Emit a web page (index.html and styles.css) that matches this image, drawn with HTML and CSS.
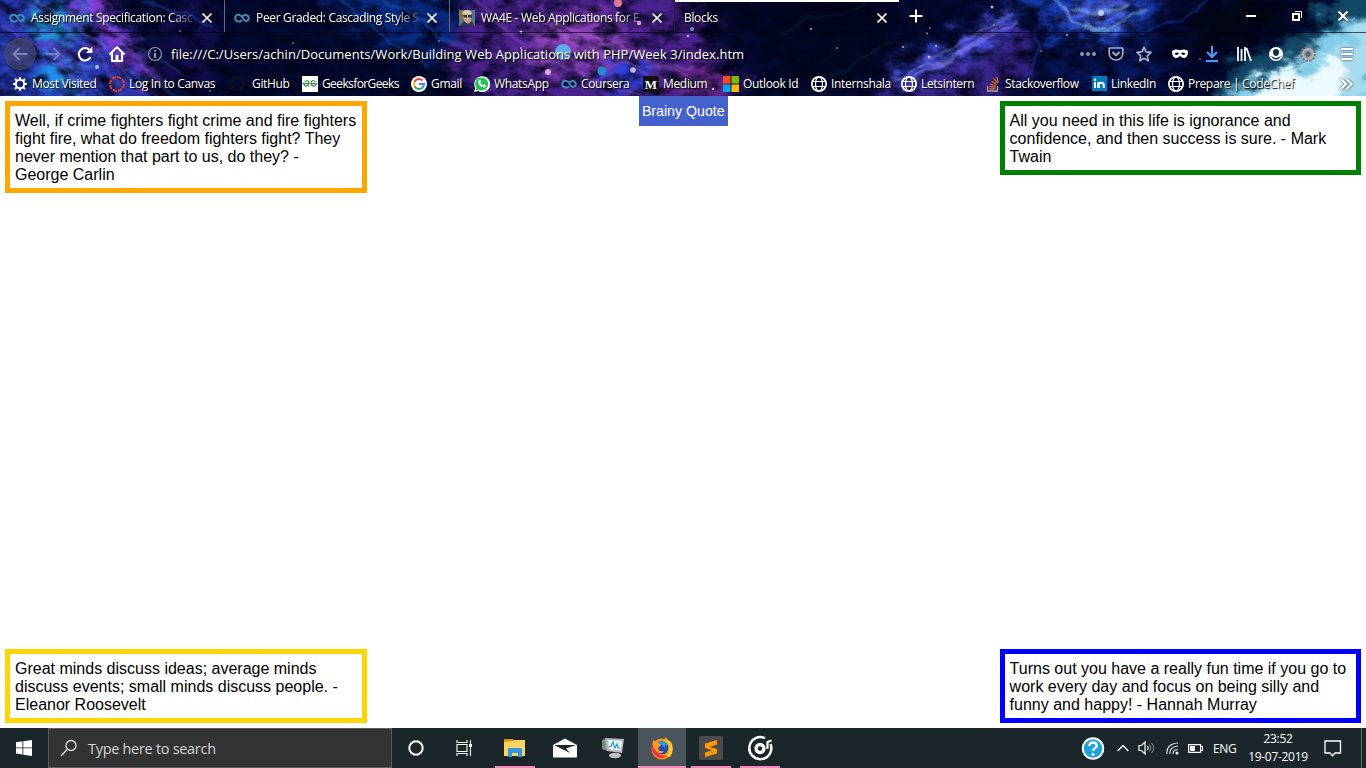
FILE: index.html
```html
<!DOCTYPE html>
<html lang="en">
<head>
<meta charset="utf-8">
<title>Blocks</title>
<link rel="stylesheet" href="styles.css">
</head>
<body>
<svg class="defs" width="0" height="0">
  <symbol id="coursera" viewBox="0 0 16 16"><path d="M8.2 10.2C7 12 2 12.600 1.200 8.600 1 4.500 5.600 3.200 8 6.800L9.500 9.300C11 12 15 11 14.800 7.800 14.300 4.300 10 4.200 8.700 6.300" fill="none" stroke="#4588b5" stroke-width="2"/></symbol>
  <symbol id="x" viewBox="0 0 16 16"><path d="M3.500 3.500l9 9M12.500 3.500l-9 9" stroke="#fff" stroke-width="1.700"/></symbol>
  <symbol id="globe" viewBox="0 0 16 16"><g fill="none" stroke="#fff" stroke-width="1.200"><circle cx="8" cy="8" r="7.100" stroke-width="1.800"/><ellipse cx="8" cy="8" rx="3.500" ry="7"/><path d="M1.500 5.500h13M1.500 10.500h13"/></g></symbol>
</svg>
<header class="browser">
  <svg class="space" width="1366" height="96" viewBox="0 0 1366 96">
    <defs>
      <filter id="cloud" x="-10%" y="-50%" width="120%" height="200%" color-interpolation-filters="sRGB"><feGaussianBlur stdDeviation="8" result="b"/><feTurbulence type="fractalNoise" baseFrequency=".05 .07" numOctaves="6" seed="4"/><feDisplacementMap in="b" scale="45" xChannelSelector="R" yChannelSelector="G"/></filter>
      <filter id="mist" x="-10%" y="-50%" width="120%" height="200%" color-interpolation-filters="sRGB"><feGaussianBlur stdDeviation="4" result="b"/><feTurbulence type="fractalNoise" baseFrequency=".04 .06" numOctaves="6" seed="7"/><feDisplacementMap in="b" scale="45" xChannelSelector="R" yChannelSelector="G"/></filter>
      <filter id="wisp" filterUnits="userSpaceOnUse" x="0" y="0" width="1366" height="96" color-interpolation-filters="sRGB"><feGaussianBlur stdDeviation="1.100" result="b"/><feTurbulence type="fractalNoise" baseFrequency=".035" numOctaves="3" seed="9"/><feDisplacementMap in="b" scale="16" xChannelSelector="R" yChannelSelector="G"/></filter>
      <filter id="dust" x="0" y="0" width="100%" height="100%" color-interpolation-filters="sRGB"><feTurbulence type="fractalNoise" baseFrequency=".05 .08" numOctaves="6" seed="12"/><feColorMatrix values="0 0 0 0 0  0 0 0 0 .01  0 0 0 0 .1  2.200 0 0 0 -.85"/></filter>
    </defs>
    <rect width="1366" height="96" fill="#030a30"/>
    <g filter="url(#cloud)">
      <path d="M-40-30H90L150 70 150 120H-40z" fill="#2536ac"/>
      <path d="M88-30L112 20 158 85 122 66 80 10z" fill="#9340dd"/>
      <ellipse cx="55" cy="20" rx="24" ry="20" fill="#1d9ed8"/>
      <ellipse cx="60" cy="78" rx="26" ry="16" fill="#1f95f2"/>
      <path d="M0 20L60 45 100 90 70 70z" fill="#633fc8"/>
      <ellipse cx="190" cy="40" rx="32" ry="45" fill="#120d4c"/>
      <path d="M300-20L460-10 450 50 400 50 345 15z" fill="#082b80"/>
      <path d="M470-20H690L740 120H480L450 60z" fill="#49228b"/>
      <ellipse cx="580" cy="45" rx="55" ry="30" fill="#8640b3"/>
      <ellipse cx="625" cy="80" rx="26" ry="18" fill="#2640de"/>
      <ellipse cx="700" cy="85" rx="38" ry="22" fill="#602584"/>
      <ellipse cx="825" cy="40" rx="60" ry="50" fill="#020821"/>
      <path d="M850 120L900 70 1020 25 1030 80 960 120z" fill="#372386"/>
      <path d="M885 76L940 46 1010 10 1018 30 955 64 900 90z" fill="#4652e5"/>
      <path d="M985-30H1165L1140 40 1060 40z" fill="#173bb0"/>
      <ellipse cx="1100" cy="14" rx="32" ry="16" fill="#5068e5"/>
      <ellipse cx="1110" cy="75" rx="70" ry="18" fill="#07185d"/>
      <path d="M1200 0H1300L1250 50H1190z" fill="#010512"/>
    </g>
    <rect width="1366" height="96" filter="url(#dust)"/>
    <g filter="url(#mist)">
      <path d="M1195 130L1235 60 1305 35 1340-10H1420V130z" fill="#124866"/>
      <path d="M1195 125L1240 88 1300 62 1330 25 1380 15V130z" fill="#81cce6"/>
      <path d="M1240 120L1255 85 1290 73 1330 62 1350 82 1310 130z" fill="#eafaff"/>
      <path d="M1335 60L1355 28 1380 10 1400 50 1360 100z" fill="#a8dcee"/>
    </g>
    <g filter="url(#wisp)" fill="none" opacity=".5">
      <path d="M10-5Q80 20 125 100M30-5Q100 35 145 100M70-5Q110 25 165 85M0 25Q50 40 90 100" stroke="#a980ff" stroke-width="1.300"/>
      <path d="M0 45Q70 48 110 100M5 70L60 100M130-5L210 25M340 0L430 70M370-5L480 55" stroke="#357bf5" stroke-width="1.500"/>
      <path d="M60 10Q105 65 190 100M85-5Q120 45 185 75" stroke="#5da6ff"/>
      <path d="M470-5L530 55 650 100M500 15Q580 20 650 75M540 5Q570 70 690 65M500 35Q590 25 710 85" stroke="#c377e6" stroke-width="1.300"/>
      <path d="M780 30L870 5M830 75L890 45" stroke="#17747c"/>
      <path d="M890 80L950 58 1005 22M900 88L965 50 1020 20M930 60L1015 12" stroke="#aba5ff" stroke-width="2"/>
      <path d="M1035 35Q1045 60 1020 90M1140 35L1210 0" stroke="#2948dc" stroke-width="2"/>
      <path d="M1055 0L1075 25 1105 30 1150 8M1070 8L1100 14 1130 5M1085 24L1120 30" stroke="#9bdcff" stroke-width="2.500"/>
    </g>
    <g fill="#7fc5ff"><circle cx="563" cy="52" r="8" fill="#64a9e8"/><circle cx="602" cy="71" r="4.500" fill="#2789cf"/><circle cx="548" cy="72" r="3" fill="#d6a6e5"/><circle cx="618" cy="3" r="4" fill="#e27898"/><circle cx="633" cy="70" r="2.800" fill="#c2b3ee"/><circle cx="692" cy="29" r="2"/><circle cx="688" cy="36" r="1.300"/><circle cx="639" cy="23" r="2.200" fill="#e8a9ce"/></g>
    <g fill="#d9ddff" opacity=".8"><circle cx="97" cy="67" r="2"/><circle cx="180" cy="31" r=".8"/><circle cx="293" cy="43" r=".8"/><circle cx="298" cy="20" r=".8"/><circle cx="521" cy="32" r="1.500"/><circle cx="521" cy="48" r="1"/><circle cx="439" cy="41" r=".8"/><circle cx="811" cy="29" r="1.200"/><circle cx="837" cy="48" r=".8"/><circle cx="903" cy="47" r="1"/><circle cx="927" cy="33" r="1"/><circle cx="930" cy="28" r=".8"/><circle cx="936" cy="46" r="1"/><circle cx="929" cy="57" r="1.300"/><circle cx="992" cy="7" r="1.500"/><circle cx="994" cy="25" r=".8"/><circle cx="1101" cy="13" r="3"/><circle cx="1067" cy="35" r="1"/><circle cx="1041" cy="51" r=".8"/><circle cx="1200" cy="59" r=".8"/><circle cx="210" cy="91" r=".8"/><circle cx="713" cy="89" r="1.300"/></g>
  </svg>

  <div class="tabs">
    <div class="tab"><svg class="i16"><use href="#coursera"/></svg><span class="title">Assignment Specification: Casc</span><svg class="i16"><use href="#x"/></svg></div>
    <div class="tab"><svg class="i16"><use href="#coursera"/></svg><span class="title">Peer Graded: Cascading Style S</span><svg class="i16"><use href="#x"/></svg></div>
    <div class="tab last"><svg class="i16" viewBox="0 0 16 16"><path fill="#54758a" d="M0 0h16v16H0z"/><path fill="#8a704d" d="M0 0h4v9H0z"/><path fill="#caa78c" d="M4 4h8v7l-3 3-4-2z"/><path fill="#d5d0a8" d="M3 4q1-4 5-4t5 4z"/><path fill="#353842" d="M4 5h4v2.500H5zM9 5h4v2.500H9zM1 16l4-5 4 3 4-3 2 5z"/></svg><span class="title">WA4E - Web Applications for E</span><svg class="i16"><use href="#x"/></svg></div>
    <div class="tab active"><span class="title">Blocks</span><svg class="i16"><use href="#x"/></svg></div>
    <svg class="plus" width="16" height="16" viewBox="0 0 16 16"><path d="M8 1.500v13M1.500 8h13" stroke="#fff" stroke-width="2"/></svg>
    <div class="window-buttons">
      <svg width="12" height="12" viewBox="0 0 12 12"><path d="M1 6h10" stroke="#fff" stroke-width="2"/></svg>
      <svg width="12" height="12" viewBox="0 0 12 12"><path d="M2 4h6v6H2z" fill="none" stroke="#fff" stroke-width="2"/><path d="M4 1.500h6.500V8" fill="none" stroke="#fff"/></svg>
      <svg width="12" height="12" viewBox="0 0 12 12"><path d="M1.500 1.500l9 9M10.500 1.500l-9 9" stroke="#263a50" stroke-width="3.500"/><path d="M1.500 1.500l9 9M10.500 1.500l-9 9" stroke="#fff" stroke-width="2"/></svg>
    </div>
  </div>

  <div class="nav">
    <span class="back"><svg class="i16" viewBox="0 0 16 16"><path d="M15.500 8H1.500M7.500 2L1.500 8l6 6" fill="none" stroke="#7d84ad" stroke-width="1.800"/></svg></span>
    <svg class="i16 fwd" viewBox="0 0 16 16"><path d="M.5 8h14M8.500 2l6 6-6 6" fill="none" stroke="#7382b8" stroke-width="1.800"/></svg>
    <svg class="i16 reload" viewBox="0 0 16 16"><path d="M13 4.500A6.200 6.200 0 1 0 13.600 11" fill="none" stroke="#fff" stroke-width="2.100"/><path d="M15.300.8V7H9z" fill="#fff"/></svg>
    <svg class="i16 home" viewBox="0 0 16 16"><path d="M.5 8.500L8 1.200l7.500 7.300M3 7v8h10V7" fill="none" stroke="#fff" stroke-width="2.100" stroke-linejoin="round"/><path d="M6.500 9h3v6h-3z" fill="#fff"/></svg>
    <svg class="info" width="16" height="16" viewBox="0 0 16 16"><circle cx="8" cy="8" r="6.500" fill="none" stroke="#9a9caf" stroke-width="1.200"/><path d="M8 7v5M8 4v1.800" stroke="#b4b5c5" stroke-width="1.600"/></svg>
    <span class="url">file:///C:/Users/achin/Documents/Work/Building Web Applications with PHP/Week 3/index.htm</span>
    <div class="tools">
      <svg class="i16" viewBox="0 0 16 16"><g fill="#8f93bd"><circle cx="2" cy="8" r="2"/><circle cx="8" cy="8" r="2"/><circle cx="14" cy="8" r="2"/></g></svg>
      <svg class="i16" viewBox="0 0 16 16"><path d="M1.200 2h13.600v5.500a6.800 6.500 0 0 1-13.600 0z" fill="none" stroke="#a5a8c4" stroke-width="1.700" stroke-linejoin="round"/><path d="M4.500 6L8 9.300 11.500 6" fill="none" stroke="#a5a8c4" stroke-width="2"/></svg>
      <svg class="i16" viewBox="0 0 16 16"><path d="M8 1.200l2 4.700 5 .5-3.700 3.400 1 5L8 12.200l-4.300 2.600 1-5L1 6.400l5-.5z" fill="none" stroke="#b1b3c8" stroke-width="1.600" stroke-linejoin="round"/></svg>
      <svg class="i16" viewBox="0 0 16 16"><path fill-rule="evenodd" d="M0 5q1-1.500 4-1.500 2 0 4 .8 2-.8 4-.8 3 0 4 1.500 0 7-4 7-2 0-4-2-2 2-4 2-4 0-4-7zm2.500 3q2.500 2 4.500-.2Q4.500 5 2.500 8zm6.500-.2Q11 10 13.500 8 11.500 5 9 7.800z" fill="#fff"/></svg>
      <svg class="i16" viewBox="0 0 16 16"><path d="M8 0v11M3 6l5 5 5-5M2 15h12" fill="none" stroke="#459dff" stroke-width="2"/></svg>
      <svg class="i16" viewBox="0 0 16 16"><path d="M2 1v14M5.500 3v12M9 1v14M10.500 2l4.500 13" stroke="#fff" stroke-width="1.800"/></svg>
      <svg class="i16" viewBox="0 0 16 16"><circle cx="8" cy="8" r="7" fill="#fff"/><path d="M8 3a3 3 0 0 0-3 3c0 3 2 4 3 4s3-1 3-4a3 3 0 0 0-3-3M3.500 10q4.500 4 9 0v1q-4.500 5-9 0z" fill="#142b3c"/></svg>
      <svg class="i16" viewBox="0 0 16 16"><circle cx="8" cy="8" r="6.700" fill="none" stroke="#777" stroke-width="2.500" stroke-dasharray="2.300 1.200"/><circle cx="8" cy="8" r="5" fill="#999" stroke="#b5b5b5" stroke-width="2"/><circle cx="8" cy="8" r="2.300" fill="#397692" stroke="#666"/></svg>
      <svg class="i16" viewBox="0 0 16 16"><path d="M2 3h12M2 8h12M2 13h12" stroke="#fff" stroke-width="2"/></svg>
    </div>
  </div>

  <div class="bookmarks">
    <span><svg class="i16" viewBox="0 0 16 16"><circle cx="8" cy="8" r="4.200" fill="none" stroke="#fff" stroke-width="2"/><path d="M8 1v3M8 12v3M1 8h3M12 8h3M3 3l2 2M11 11l2 2M13 3l-2 2M5 11l-2 2" stroke="#fff" stroke-width="1.800"/></svg>Most Visited</span>
    <span><svg class="i16" viewBox="0 0 16 16"><circle cx="8" cy="8" r="7" fill="none" stroke="#e33b2e" stroke-width="2" stroke-dasharray="4.300 1.200"/></svg>Log In to Canvas</span>
    <span class="github"><svg class="i16" viewBox="0 0 16 16"><path fill="#0c1020" fill-rule="evenodd" d="M8 0a8 8 0 0 0-2.500 15.600v-2Q2.800 14 2 11.500q2 .6 3.500 1 0-1 .5-1.500-3-.5-3-3.500 0-1.200.8-2-.3-1 .1-2.200Q5 3.300 6 4q2-.5 4 0 1-.7 2.100-.7.4 1.200.1 2.200.8.800.8 2 0 3-3 3.500.5.500.5 1.500v3.100A8 8 0 0 0 8 0"/></svg>GitHub</span>
    <span class="geeks"><svg class="i16" viewBox="0 0 16 16"><path fill="#fff" d="M0 0h16v16H0z"/><path d="M2.500 5.500Q7 3.500 7 7t-4 3L1.500 7.700H7M13.500 5.500Q9 3.500 9 7t4 3l1.500-2.300H9" fill="none" stroke="#388548" stroke-width="1.200"/></svg>GeeksforGeeks</span>
    <span><svg class="i16" viewBox="0 0 16 16"><circle cx="8" cy="8" r="8" fill="#fff"/><g fill="none" stroke-width="2"><path d="M11.500 4.500A5 5 0 0 0 3.500 5.800" stroke="#ea4335"/><path d="M3.500 5.800a5 5 0 0 0 0 4.500" stroke="#fbbc05"/><path d="M3.500 10.300a5 5 0 0 0 8 1.200" stroke="#34a853"/><path d="M11.500 11.500A5 5 0 0 0 13 8H8" stroke="#4285f4"/></g></svg>Gmail</span>
    <span><svg class="i16" viewBox="0 0 16 16"><path d="M0 16l1.200-4A8 8 0 1 1 4 15z" fill="#fff"/><path d="M1.500 14.500L2.500 12A6.500 6.500 0 1 1 4.500 13.700z" fill="#21c44f"/><path d="M5 4q1-1 1.500 0l.5 1.500-.8 1q1 2 3 2.800l1-1L12 9.500q0 2-2 2Q4.500 10.500 4.200 6z" fill="#fff"/></svg>WhatsApp</span>
    <span><svg class="i16"><use href="#coursera"/></svg>Coursera</span>
    <span><svg class="i16" viewBox="0 0 16 16"><path fill="#111" d="M0 0h16v16H0z"/><text x="8" y="12.500" text-anchor="middle" class="m-logo">M</text></svg>Medium</span>
    <span><svg class="i16" viewBox="0 0 16 16"><path fill="#f35022" d="M0 0h7.500v7.500H0z"/><path fill="#80bb03" d="M8.500 0H16v7.500H8.500z"/><path fill="#03a5f0" d="M0 8.500h7.500V16H0z"/><path fill="#ffba08" d="M8.500 8.500H16V16H8.500z"/></svg>Outlook Id</span>
    <span><svg class="i16"><use href="#globe"/></svg>Internshala</span>
    <span><svg class="i16"><use href="#globe"/></svg>Letsintern</span>
    <span><svg class="i16" viewBox="0 0 16 16"><path d="M2.500 10v5h10v-5" fill="none" stroke="#a8a8a8" stroke-width="1.300"/><path d="M4.500 12.800h6M4.500 10.500l6 .7M5 8l5.700 1.800M6.500 5l5 3.400M8.800 2.500l3.700 4.700M12 1l1 5.500" stroke="#e87922" stroke-width="1.200"/></svg>Stackoverflow</span>
    <span><svg width="15" height="15" viewBox="0 0 15 15"><path fill="#0579b7" d="M0 0h15v15H0z"/><path fill="#fff" d="M2 6h2v6H2zM5.500 6h2v6h-2z"/><circle cx="3" cy="3.700" r="1.200" fill="#fff"/><path d="M6.500 12V9q0-2.200 2.500-2.200T11.800 9v3" fill="none" stroke="#fff" stroke-width="2"/></svg>LinkedIn</span>
    <span><svg class="i16"><use href="#globe"/></svg>Prepare | CodeChef</span>
    <svg class="more" width="14" height="14" viewBox="0 0 14 14"><path d="M1.500 1.500L7 7l-5.500 5.500M7 1.500L12.500 7 7 12.500" fill="none" stroke="#fff" stroke-width="2"/></svg>
  </div>
</header>

<main class="page">
  <div class="row">
    <div class="quote orange">Well, if crime fighters fight crime and fire fighters fight fire, what do freedom fighters fight? They never mention that part to us, do they? - George&nbsp;Carlin</div>
    <a class="link">Brainy Quote</a>
    <div class="quote green">All you need in this life is ignorance and confidence, and then success is sure. - Mark Twain</div>
  </div>
  <div class="row bottom">
    <div class="quote gold">Great minds discuss ideas; average minds discuss events; small minds discuss people. - Eleanor Roosevelt</div>
    <div class="quote blue">Turns out you have a really fun time if you go to work every day and focus on being silly and funny and happy! - Hannah Murray</div>
  </div>
</main>

<footer class="taskbar">
  <span class="start"><svg width="16" height="16" viewBox="0 0 16 16"><path fill="#fff" d="M0 2.300L6.500 1.300V7.500H0zM7.300 1.200L16 0v7.500H7.300zM0 8.300h6.500v6.200L0 13.600zM7.300 8.300H16V16l-8.700-1.300z"/></svg></span>
  <div class="search"><svg width="18" height="18" viewBox="0 0 18 18"><circle cx="11" cy="6.500" r="5" fill="none" stroke="#ddd" stroke-width="1.300"/><path d="M7.300 10.300L1 17" stroke="#ddd" stroke-width="1.400"/></svg><span>Type here to search</span></div>
  <div class="apps">
    <span><svg width="16" height="16" viewBox="0 0 16 16"><circle cx="8" cy="8" r="6.700" fill="none" stroke="#fff" stroke-width="2"/></svg></span>
    <span><svg width="17" height="16" viewBox="0 0 17 16"><path d="M1 0v2.500h10V0M1 16v-2.500h10V16M1 4.500h10v7H1zM14.500 0v16" fill="none" stroke="#fff" stroke-width="1.100"/><path fill="#fff" d="M13 4h3v3h-3z"/></svg></span>
    <span class="open"><svg width="22" height="20" viewBox="0 0 22 20"><path fill="#d99a0c" d="M0 1h9l1 3H0z"/><path fill="#fcd265" d="M0 4l9-1 1-1h11v16H0z"/><path fill="#3498dd" d="M4 11q0-1 1-1h12q1 0 1 1v8h-4v-4H8v4H4z"/></svg></span>
    <span class="mail"><svg width="24" height="20" viewBox="0 0 24 20"><path fill="#fff" d="M0 7l12-6.500L24 7v12.500H0z"/><path fill="#1b262b" d="M1 7h22l-10 3.500L17 15z"/></svg></span>
    <span><svg width="24" height="22" viewBox="0 0 24 22"><path fill="#828989" d="M1 3l5-2v13l-5-2z"/><path fill="#b6bcbd" d="M4 1l19 1-2 14-15-2z"/><path fill="#edf3f6" d="M7 3l14 1-1.500 9.500L8 12z"/><path d="M8 10l2-1 2-4 2 6 2-4 1 4h2" fill="none" stroke="#269ac4" stroke-width="1.200"/><ellipse cx="14" cy="18.500" rx="6" ry="2.800" fill="#c0c3c3"/><path fill="#35bb3b" d="M1 7h2v2H1z"/></svg></span>
    <span class="open current"><svg width="24" height="24" viewBox="0 0 24 24"><circle cx="12" cy="13" r="10.500" fill="#ff8d17"/><path fill="#ffcb28" d="M15 1q-.5 4 3 6 3 5-1 13l3 1q5-8 1-15-4-2-6-5"/><path fill="#f42b45" d="M3 6q-3 7 1 12 6 7 13 2-7 1-10-4-2-5 2-7-4 0-4-4z"/><circle cx="12" cy="12" r="6.300" fill="#214bb0"/><path fill="#ff9b1c" d="M3 4l5 3 4 1-4 4q1 4 6 3-2 4-7 1Q1 11 3 4"/><path fill="#1f9af0" d="M8 6q6-3 10 4l-3-1 0 4q-2-4-4-4z"/></svg></span>
    <span class="open"><svg width="24" height="24" viewBox="0 0 24 24"><rect width="24" height="24" rx="2" fill="#4a4a4a"/><path fill="#ff9800" d="M6 7.500L18 4v4.500L11 11l7 2v4.500L6 21v-4.500l7-2.200-7-2.300z"/></svg></span>
    <span class="open"><svg width="26" height="26" viewBox="0 0 26 26"><path d="M18 3.200A11 11 0 1 0 23.500 9" fill="none" stroke="#fff" stroke-width="2.500"/><circle cx="13" cy="13.500" r="4" fill="none" stroke="#fff" stroke-width="3.300"/><path d="M20.500 14V7l4-1.500" fill="none" stroke="#fff" stroke-width="2.200"/></svg></span>
  </div>
  <div class="tray">
    <svg width="24" height="24" viewBox="0 0 24 24"><circle cx="12" cy="12.500" r="10.200" fill="#1aa4de" stroke="#fff" stroke-width="2"/><path d="M8.300 10Q8.500 6.500 12 6.500t3.700 3.300Q15.700 11.500 13 13q-1 .7-1 2" fill="none" stroke="#fff" stroke-width="2.400"/><circle cx="12" cy="18.200" r="1.500" fill="#fff"/></svg>
    <svg class="caret" width="12" height="8" viewBox="0 0 12 8"><path d="M.7 7L6 1.500 11.300 7" fill="none" stroke="#fff" stroke-width="1.300"/></svg>
    <svg class="sound" width="17" height="14" viewBox="0 0 17 14"><path d="M1 4.500h2.500L7 1v12L3.500 9.500H1z" fill="none" stroke="#fff" stroke-width="1.200"/><path d="M9.500 5q1.500 2 0 4" fill="none" stroke="#fff" stroke-width="1.200"/><path d="M11.500 3.500q3 3.500 0 7M13.500 2q4.500 5 0 10" fill="none" stroke="#899094"/></svg>
    <svg class="wifi" width="13" height="14" viewBox="0 0 13 14"><path d="M1 13Q0 3 12 2M4 13Q3 6 12 5M7 13Q7 8.500 12 8.500" fill="none" stroke="#dfe2e3" stroke-width="1.100"/><circle cx="11" cy="12" r="1.500" fill="#fff"/></svg>
    <svg class="battery" width="15" height="9" viewBox="0 0 15 9"><path d="M.6.600h12v7.800H.6zM13 2.500h1.500v4H13" fill="none" stroke="#fff" stroke-width="1.200"/><path fill="#fff" d="M2 2h5v5H2z"/></svg>
    <span class="lang">ENG</span>
    <span class="clock"><span>23:52</span><span class="date">19-07-2019</span></span>
    <svg class="action" width="18" height="17" viewBox="0 0 18 17"><path d="M1 1h15.500v12H11l-2.500 2.700L6 13H1z" fill="none" stroke="#fff" stroke-width="1.300"/></svg>
    <span class="peek"></span>
  </div>
</footer>
</body>
</html>
```
FILE: styles.css
```css
* { box-sizing: border-box; }
body { margin: 0; width: 1366px; height: 768px; overflow: hidden; display: flex; flex-direction: column; background: #fff; font-family: "Open Sans", "Noto Sans", sans-serif; }
svg { flex: none; display: block; }
.defs { position: absolute; }
.i16 { width: 16px; height: 16px; }

.browser { position: relative; height: 96px; color: #fff; font-size: 12px; font-weight: 500; letter-spacing: -.33px; text-shadow: 1px 1px 1px #000; border-bottom: 1px solid #0b0d25; }
.space { position: absolute; left: 0; top: 0; }
.tabs, .nav, .bookmarks { position: relative; display: flex; align-items: center; }
.tabs { height: 33px; border-bottom: 1px solid rgba(0,0,20,.65); }
.tab { width: 225px; height: 32px; padding: 3px 9px 0; display: flex; align-items: center; border-right: 1px solid #66687f; }
.tab.last { border-right-color: #28204b; }
.title { width: 170px; margin: 0 -2px 0 6px; white-space: nowrap; -webkit-mask-image: linear-gradient(90deg, #000 138px, transparent 168px); mask-image: linear-gradient(90deg, #000 138px, transparent 168px); }
.active { width: 224px; border: 0; border-top: 2px solid #fff; background: rgba(0,0,15,.25); padding-top: 1px; }
.active .title { width: 188px; margin: 0 2px 0 0; }
.plus { margin-left: 9px; }
.window-buttons { display: flex; gap: 34px; margin-left: auto; padding-right: 17px; }

.nav { height: 37px; padding: 4px 11px 0 4px; }
.back { width: 32px; height: 32px; display: grid; place-items: center; border: 1px solid #45475e; border-radius: 50%; background: rgba(65,70,115,.75); }
.fwd { margin-left: 9px; }
.reload { margin-left: 16px; }
.home { margin-left: 16px; }
.info { margin-left: 22px; }
.url { width: 900px; margin-left: 8px; font-size: 13px; font-weight: 400; letter-spacing: .03px; white-space: nowrap; }
.tools { display: grid; grid-template-columns: 28px 28px 36px 32px 32px 32px 32px 39px 16px; margin-left: auto; }
.tools svg:last-child, .more { filter: drop-shadow(0 0 1px #1b4055); }

.bookmarks { height: 25px; padding: 2px 12px 0; display: grid; grid-template-columns: 97px 120px 73px 109px 63px 87px 82px 80px 88px 90px 84px 107px 76px 171px 14px; white-space: nowrap; }
.bookmarks span { display: flex; align-items: center; gap: 4px; }
.bookmarks .github { gap: 7px; }
.bookmarks .geeks { letter-spacing: -.6px; }
.m-logo { font: bold 13px "Liberation Serif", serif; fill: #fff; letter-spacing: 0; }

.page { flex: 1; padding: 0 5px 5px; display: flex; flex-direction: column; justify-content: space-between; font: 16px/18px "Liberation Sans", Arial, sans-serif; color: #000; }
.row { display: flex; justify-content: space-between; align-items: flex-start; }
.quote { width: 362px; padding: 6px 5px 4px; border: 5px solid; margin-top: 5px; }
.green, .blue { width: 361.400px; }
.orange { border-color: #ffa500; }
.green { border-color: #008000; }
.gold { border-color: #ffd700; }
.blue { border-color: #00f; }
.link { width: 89px; height: 30px; background: #4461cb; color: #fff; font-size: 14.200px; line-height: 30px; text-align: center; white-space: nowrap; }

.taskbar { height: 40px; display: flex; background: #1b262b; color: #fff; }
.start { width: 48px; display: grid; place-items: center; }
.search { width: 344px; display: flex; align-items: center; gap: 10px; padding-left: 11px; background: #333; border: 1px solid #5c5c5c; color: #d5d5d5; font-size: 14.500px; letter-spacing: -.3px; }
.apps { display: grid; grid-template-columns: 48px 48px 53px 47px 50px 48px 50px 48px; }
.apps span { display: grid; place-items: center; }
.apps .open { background: linear-gradient(#f488b7, #f488b7) center bottom / 40px 2px no-repeat; }
.apps .current { background: linear-gradient(#f488b7, #f488b7) center bottom / 100% 2px no-repeat #4b545a; }
.tray { margin-left: auto; display: flex; align-items: center; font-size: 12px; letter-spacing: -.3px; }
.caret { margin-left: 12px; }
.sound { margin-left: 9px; }
.wifi { margin-left: 11px; }
.battery { margin-left: 9px; }
.lang { width: 24px; margin-left: 10px; }
.clock { width: 60px; margin-left: 11px; display: flex; flex-direction: column; align-items: center; line-height: 18px; }
.action { margin-left: 16px; }
.peek { width: 5px; height: 40px; margin-left: 19px; border-left: 1px solid #697074; }
```
